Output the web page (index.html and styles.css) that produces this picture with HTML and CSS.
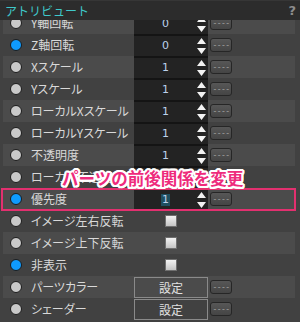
FILE: index.html
```html
<!DOCTYPE html>
<html lang="ja">
<head>
<meta charset="utf-8">
<link rel="stylesheet" href="styles.css">
</head>
<body>
<div class="panel">
  <div class="header">
    <span class="title">アトリビュート</span>
    <span class="help">?</span>
  </div>
  <div class="viewport">
    <div class="list">
      <div class="row light"><span class="radio"></span><span class="label">Y軸回転</span><div class="num"><span class="val">0</span><svg class="spin" width="9" height="16" viewBox="0 0 9 16"><path d="M4.5 0 L9 6 L0 6 Z M0 10 L9 10 L4.5 16 Z" fill="#f2f2f2"/></svg></div><span class="btn">----</span></div>
      <div class="row"><span class="radio on"></span><span class="label">Z軸回転</span><div class="num"><span class="val">0</span><svg class="spin" width="9" height="16" viewBox="0 0 9 16"><path d="M4.5 0 L9 6 L0 6 Z M0 10 L9 10 L4.5 16 Z" fill="#f2f2f2"/></svg></div><span class="btn">----</span></div>
      <div class="row light"><span class="radio"></span><span class="label">Xスケール</span><div class="num"><span class="val">1</span><svg class="spin" width="9" height="16" viewBox="0 0 9 16"><path d="M4.5 0 L9 6 L0 6 Z M0 10 L9 10 L4.5 16 Z" fill="#f2f2f2"/></svg></div><span class="btn">----</span></div>
      <div class="row"><span class="radio"></span><span class="label">Yスケール</span><div class="num"><span class="val">1</span><svg class="spin" width="9" height="16" viewBox="0 0 9 16"><path d="M4.5 0 L9 6 L0 6 Z M0 10 L9 10 L4.5 16 Z" fill="#f2f2f2"/></svg></div><span class="btn">----</span></div>
      <div class="row light"><span class="radio"></span><span class="label">ローカルXスケール</span><div class="num"><span class="val">1</span><svg class="spin" width="9" height="16" viewBox="0 0 9 16"><path d="M4.5 0 L9 6 L0 6 Z M0 10 L9 10 L4.5 16 Z" fill="#f2f2f2"/></svg></div><span class="btn">----</span></div>
      <div class="row"><span class="radio"></span><span class="label">ローカルYスケール</span><div class="num"><span class="val">1</span><svg class="spin" width="9" height="16" viewBox="0 0 9 16"><path d="M4.5 0 L9 6 L0 6 Z M0 10 L9 10 L4.5 16 Z" fill="#f2f2f2"/></svg></div><span class="btn">----</span></div>
      <div class="row light"><span class="radio"></span><span class="label">不透明度</span><div class="num"><span class="val">1</span><svg class="spin" width="9" height="16" viewBox="0 0 9 16"><path d="M4.5 0 L9 6 L0 6 Z M0 10 L9 10 L4.5 16 Z" fill="#f2f2f2"/></svg></div><span class="btn">----</span></div>
      <div class="row"><span class="radio"></span><span class="label">ローカル不透明度</span><div class="num"><span class="val">1</span><svg class="spin" width="9" height="16" viewBox="0 0 9 16"><path d="M4.5 0 L9 6 L0 6 Z M0 10 L9 10 L4.5 16 Z" fill="#f2f2f2"/></svg></div><span class="btn">----</span></div>
      <div class="row light hl"><span class="radio on"></span><span class="label">優先度</span><div class="num"><span class="val sel">1</span><svg class="spin" width="9" height="16" viewBox="0 0 9 16"><path d="M4.5 0 L9 6 L0 6 Z M0 10 L9 10 L4.5 16 Z" fill="#f2f2f2"/></svg></div><span class="btn">----</span></div>
      <div class="row"><span class="radio"></span><span class="label">イメージ左右反転</span><div class="ctl"><span class="check"></span></div></div>
      <div class="row light"><span class="radio"></span><span class="label">イメージ上下反転</span><div class="ctl"><span class="check"></span></div></div>
      <div class="row"><span class="radio on"></span><span class="label">非表示</span><div class="ctl"><span class="check"></span></div></div>
      <div class="row light"><span class="radio"></span><span class="label">パーツカラー</span><div class="set">設定</div><span class="btn">----</span></div>
      <div class="row"><span class="radio"></span><span class="label">シェーダー</span><div class="set">設定</div><span class="btn">----</span></div>
    </div>
  </div>
  <div class="note">パーツの前後関係を変更</div>
</div>
</body>
</html>
```
FILE: styles.css
```css
* { box-sizing: border-box; }
html, body {
  margin: 0;
  padding: 0;
  width: 300px;
  height: 322px;
  overflow: hidden;
  background: #414141;
  font-family: "Noto Sans CJK JP", "Noto Sans", sans-serif;
}
.panel {
  position: relative;
  width: 300px;
  height: 322px;
  display: flex;
  flex-direction: column;
}
.header {
  height: 20px;
  flex: none;
  background: #2c2c2c;
  border-top: 1px solid #363636;
  display: flex;
  align-items: center;
  justify-content: space-between;
  padding: 0 4px 0 5px;
}
.title {
  color: #3fc9cb;
  font-size: 12px;
  line-height: 14px;
}
.help {
  color: #8c8c8c;
  font-family: "DejaVu Sans", sans-serif;
  font-weight: bold;
  font-size: 13px;
  line-height: 14px;
}
.viewport {
  flex: 1;
  overflow: hidden;
}
.list {
  margin-top: -8px;
  display: flex;
  flex-direction: column;
}
.row {
  position: relative;
  height: 22px;
  margin: 0 5px 0 3px;
  display: flex;
  align-items: center;
  padding-left: 7px;
}
.row.light { background: #4b4b4b; }
.radio {
  width: 12px;
  height: 12px;
  border-radius: 50%;
  border: 1px solid #1c1c1c;
  background: #c9c9c9;
  flex: none;
}
.radio.on { background: #0f9bff; }
.label {
  margin-left: 9px;
  width: 103px;
  flex: none;
  color: #d9d9d9;
  font-size: 12px;
  line-height: 14px;
  white-space: nowrap;
  overflow: hidden;
  font-feature-settings: "palt";
}
.num {
  width: 74px;
  height: 22px;
  flex: none;
  background: #232323;
  border-top: 2px solid #141414;
  display: flex;
  align-items: center;
  padding-right: 2px;
}
.val {
  flex: 1;
  text-align: center;
  color: #bcd2ec;
  font-family: "DejaVu Sans", sans-serif;
  font-size: 11px;
  line-height: 12px;
}
.val.sel {
  flex: none;
  margin: 0 auto;
  background: #1f4f60;
  padding: 0 1px;
  line-height: 12px;
}
.spin { flex: none; display: block; }
.btn {
  margin-left: 2px;
  width: 22px;
  height: 14px;
  flex: none;
  border: 1px solid #262626;
  border-radius: 3px;
  background: linear-gradient(#575757, #454545);
  color: #b0b0b0;
  font-family: "Liberation Mono", monospace;
  font-size: 8px;
  line-height: 11px;
  text-align: center;
  letter-spacing: -0.5px;
}
.ctl {
  width: 74px;
  flex: none;
  display: flex;
  justify-content: center;
  align-items: center;
}
.check {
  width: 12px;
  height: 12px;
  border: 1px solid #6f6f6f;
  background: linear-gradient(#f2f2f2, #c4c4c4);
}
.set {
  width: 74px;
  height: 21px;
  margin-top: 1px;
  flex: none;
  border: 1px solid #8a8a8a;
  color: #e2e2e2;
  font-size: 12px;
  line-height: 19px;
  text-align: center;
}
.row.hl::after {
  content: "";
  position: absolute;
  top: 0;
  bottom: -1px;
  left: -2px;
  right: -1px;
  border: 2px solid #e2306f;
}
.note {
  position: absolute;
  left: 62px;
  top: 168px;
  color: #ee2b7c;
  font-weight: bold;
  font-size: 16.5px;
  line-height: 20px;
  white-space: nowrap;
  text-shadow:
    2px 0 0 #fff, -2px 0 0 #fff, 0 2px 0 #fff, 0 -2px 0 #fff,
    1.5px 1.5px 0 #fff, -1.5px 1.5px 0 #fff, 1.5px -1.5px 0 #fff, -1.5px -1.5px 0 #fff,
    1px 2px 0 #fff, -1px 2px 0 #fff, 1px -2px 0 #fff, -1px -2px 0 #fff,
    2px 1px 0 #fff, -2px 1px 0 #fff, 2px -1px 0 #fff, -2px -1px 0 #fff;
}
```
